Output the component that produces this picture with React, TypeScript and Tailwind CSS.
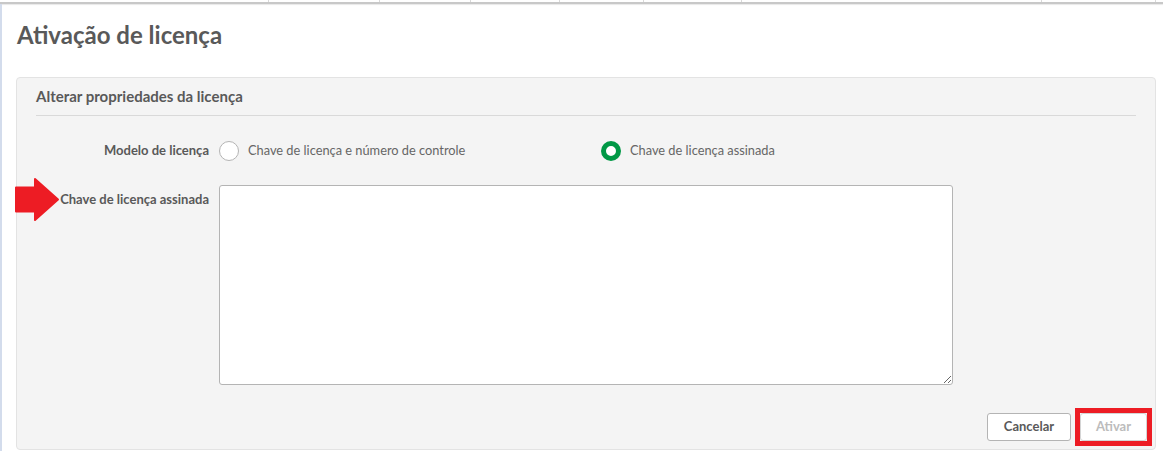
const font = "font-['Lato','Noto_Sans',sans-serif]";

const topColumns = ['w-[269px]', 'w-[111px]', 'w-[91px]', 'w-[89px]', 'w-[84px]', 'w-[98px]', 'w-[300px]', 'w-[114px]'];

const App = () => {
  return (
    <div className={`flex h-[451px] w-[1163px] flex-col overflow-hidden bg-white text-[#595959] ${font}`}>
      <div className="flex h-[4px] shrink-0 border-b-2 border-[#c8c8c8] shadow-[0_1px_1px_#e8e8e8]">
        {topColumns.map((w, i) => (
          <div key={i} className={`${w} shrink-0 border-r border-[#d9d9d9]`} />
        ))}
      </div>

      <div className="flex min-h-0 flex-1 flex-col border-l-2 border-[#d3dcec] pb-[1px] pl-[14px] pr-[7px]">
        <h1 className="ml-[1px] mt-[17px] h-[28px] text-[24px] font-bold leading-[28px]">Ativação de licença</h1>

        <div className="mt-[28px] flex flex-1 flex-col rounded-[4px] border border-[#e3e3e3] bg-[#f4f4f4] px-[19px]">
          <h2 className="flex h-[38px] shrink-0 items-center border-b border-[#d9d9d9] text-[15px] font-bold">
            Alterar propriedades da licença
          </h2>

          <div className="mt-[23px] flex h-[24px] items-center">
            <span className="w-[173px] text-right text-[13px] font-bold">Modelo de licença</span>
            <span className="ml-[10px] h-[20px] w-[20px] rounded-full border border-[#b4b4b4] bg-white" />
            <span className="ml-[9px] w-[353px] text-[12.8px] text-[#666666]">Chave de licença e número de controle</span>
            <span className="h-[20px] w-[20px] rounded-full border-[5px] border-[#009845] bg-white" />
            <span className="ml-[9px] text-[12.8px] text-[#666666]">Chave de licença assinada</span>
          </div>

          <div className="relative mt-[22px] flex">
            <svg className="absolute left-[-21px] top-[-8px]" width="46" height="46" viewBox="0 0 46 46">
              <path
                d="M1 10.5H20V2L43 22.5L20 43V34.5H1Z"
                fill="#ed1c24"
                stroke="#ed1c24"
                strokeWidth="2"
                strokeLinejoin="round"
              />
            </svg>
            <span className="relative mt-[4px] w-[173px] text-right text-[13px] font-bold leading-[20px]">
              Chave de licença assinada
            </span>
            <textarea className="ml-[10px] h-[200px] w-[734px] rounded-[3px] border border-[#b4b4b4] bg-white" />
          </div>

          <div className="mr-[-11px] mt-[28px] flex justify-end gap-[9px]">
            <button className="h-[28px] w-[84px] rounded-[3px] border border-[#b4b4b4] bg-white text-[13px] font-bold">
              Cancelar
            </button>
            <div className="relative h-[28px] w-[67px]">
              <button className="h-[28px] w-[67px] rounded-[3px] border border-[#d4d4d4] bg-white text-[13px] font-bold text-[#bcbcbc]">
                Ativar
              </button>
              <div className="absolute inset-[-5px] border-[5px] border-[#ed1c24]" />
            </div>
          </div>
        </div>
      </div>
    </div>
  );
};

export default App;
